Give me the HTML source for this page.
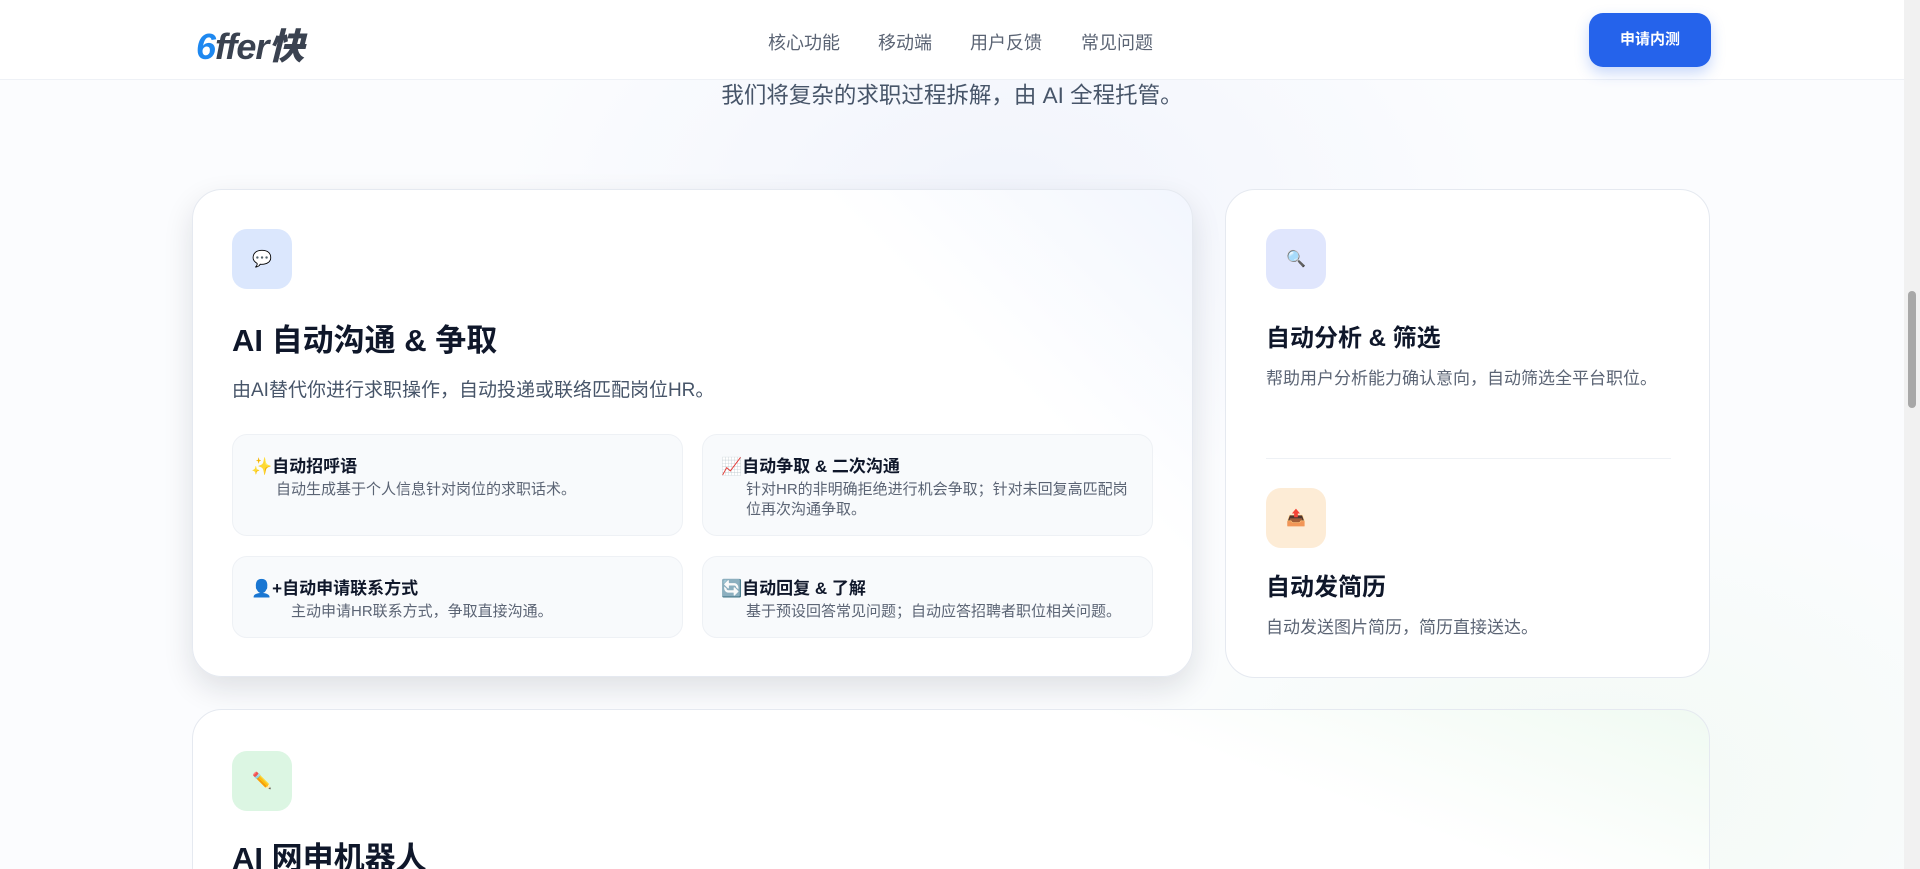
<!DOCTYPE html>
<html style="height:869px;overflow:hidden"><head><meta charset="utf-8"><style>
*{margin:0;padding:0;box-sizing:border-box}
body{width:1920px;height:869px;overflow:hidden;font-family:"Liberation Sans","Noto Sans CJK SC",sans-serif;background:#fbfcfe;position:relative;color:#0f172a}
.bg{position:absolute;inset:0;background:radial-gradient(ellipse 500px 300px at 1000px 200px,#f1f4fc,transparent),radial-gradient(ellipse 500px 300px at 1600px 780px,#f3faf5,transparent),#fbfcfe}
.nav{position:absolute;left:0;top:0;width:1904px;height:80px;background:rgba(255,255,255,.95);border-bottom:1px solid #eef1f6}
.logo{position:absolute;left:196px;top:18px;font:italic 900 36px "Liberation Sans","Noto Sans CJK SC",sans-serif;color:#3a4250;letter-spacing:-1px}
.logo b{color:#1e88f0}
.links{position:absolute;top:29px;left:768px;font-size:18px;color:#5b6474}
.links span{position:absolute;white-space:nowrap}
.btn{position:absolute;left:1589px;top:13px;width:122px;height:54px;border-radius:14px;background:#2563eb;color:#fff;font-weight:700;font-size:15px;text-align:center;line-height:54px;box-shadow:0 6px 14px rgba(37,99,235,.25)}
.sub{position:absolute;top:78px;left:0;width:1904px;text-align:center;font-size:22.5px;color:#475569}
.card{position:absolute;background:#fff;border:1px solid #e5e9f0;border-radius:30px}
.big{left:192px;top:189px;width:1001px;height:488px;box-shadow:0 12px 30px rgba(15,23,42,.12);background:linear-gradient(225deg,#f2f6fe 0%,#fff 25%)}
.ic{position:absolute;width:60px;height:60px;border-radius:15px;display:flex;align-items:center;justify-content:center;font-size:16px}
.t1{position:absolute;font-weight:700;font-size:31px;white-space:nowrap}
.d1{position:absolute;font-size:19px;color:#475569;white-space:nowrap}
.sc{position:absolute;background:#f8fafc;border:1px solid #eef1f5;border-radius:15px}
.sc h4{position:absolute;left:18px;top:17px;font-size:17px;font-weight:700;white-space:nowrap}
.sc p{position:absolute;left:43px;top:45px;font-size:15px;color:#5b6474;line-height:20px;width:390px}
.t2{position:absolute;font-weight:700;font-size:24px;white-space:nowrap}
.d2{position:absolute;font-size:17px;color:#5b6474;white-space:nowrap}
.scroll{position:absolute;right:0;top:0;width:16px;height:869px;background:#f1f1f1}
.thumb{position:absolute;left:4px;top:291px;width:8px;height:117px;border-radius:4px;background:#a8a8a8}
</style></head><body>
<div class="bg"></div>
<div class="sub">我们将复杂的求职过程拆解，由 AI 全程托管。</div>
<div class="nav">
<div class="logo"><b>6</b>ffer快</div>
<div class="links"><span style="left:0">核心功能</span><span style="left:110px">移动端</span><span style="left:202px">用户反馈</span><span style="left:313px">常见问题</span></div>
<div class="btn">申请内测</div>
</div>

<div class="card big">
<div class="ic" style="left:39px;top:39px;background:#dbe7fd">💬</div>
<div class="t1" style="left:39px;top:125px">AI 自动沟通 &amp; 争取</div>
<div class="d1" style="left:39px;top:185px">由AI替代你进行求职操作，自动投递或联络匹配岗位HR。</div>
<div class="sc" style="left:39px;top:244px;width:451px;height:102px"><h4>✨自动招呼语</h4><p>自动生成基于个人信息针对岗位的求职话术。</p></div>
<div class="sc" style="left:509px;top:244px;width:451px;height:102px"><h4>📈自动争取 &amp; 二次沟通</h4><p style="left:43px">针对HR的非明确拒绝进行机会争取；针对未回复高匹配岗位再次沟通争取。</p></div>
<div class="sc" style="left:39px;top:366px;width:451px;height:82px"><h4>👤+自动申请联系方式</h4><p style="left:58px">主动申请HR联系方式，争取直接沟通。</p></div>
<div class="sc" style="left:509px;top:366px;width:451px;height:82px"><h4>🔄自动回复 &amp; 了解</h4><p>基于预设回答常见问题；自动应答招聘者职位相关问题。</p></div>
</div>

<div class="card" style="left:1225px;top:189px;width:485px;height:489px">
<div class="ic" style="left:40px;top:39px;background:#e0e6fd">🔍</div>
<div class="t2" style="left:40px;top:128px">自动分析 &amp; 筛选</div>
<div class="d2" style="left:40px;top:174px">帮助用户分析能力确认意向，自动筛选全平台职位。</div>
<div style="position:absolute;left:40px;top:268px;width:405px;height:1px;background:#eef1f5"></div>
<div class="ic" style="left:40px;top:298px;background:#fdecd6">📤</div>
<div class="t2" style="left:40px;top:377px">自动发简历</div>
<div class="d2" style="left:40px;top:423px">自动发送图片简历，简历直接送达。</div>
</div>

<div class="card" style="left:192px;top:709px;width:1518px;height:200px;background:linear-gradient(200deg,#f0faf2 0%,#fff 30%)">
<div class="ic" style="left:39px;top:41px;background:#dcf6e3">✏️</div>
<div class="t1" style="left:39px;top:123px">AI 网申机器人</div>
</div>

<div class="scroll"><div class="thumb"></div></div>
</body></html>
